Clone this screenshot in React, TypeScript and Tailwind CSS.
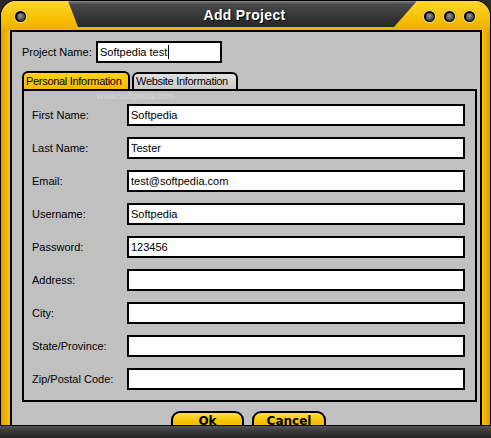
import React from 'react';

const fields: { label: string; value: string }[] = [
  { label: 'First Name:', value: 'Softpedia' },
  { label: 'Last Name:', value: 'Tester' },
  { label: 'Email:', value: 'test@softpedia.com' },
  { label: 'Username:', value: 'Softpedia' },
  { label: 'Password:', value: '123456' },
  { label: 'Address:', value: '' },
  { label: 'City:', value: '' },
  { label: 'State/Province:', value: '' },
  { label: 'Zip/Postal Code:', value: '' },
];

const Knob: React.FC = () => (
  <div className="w-[15px] h-[15px] rounded-full bg-[radial-gradient(circle,#fff2a0_40%,#e8b000_75%)] flex items-center justify-center">
    <div className="w-[11px] h-[11px] rounded-full bg-black flex items-center justify-center">
      <div className="w-[8px] h-[8px] rounded-full bg-[radial-gradient(circle_at_40%_35%,#9a9a9a,#3a3a3a_70%)]" />
    </div>
  </div>
);

const App: React.FC = () => {
  return (
    <div className="w-[491px] h-[438px] flex flex-col bg-[#2a2a2a] overflow-hidden font-['Liberation_Sans',Arial,sans-serif] text-[11px] text-black">
      {/* window frame */}
      <div className="flex-1 flex flex-col rounded-t-[16px] border border-b-0 border-black bg-[linear-gradient(90deg,#e49c00_0px,#f7c200_8px,#f7c200_calc(100%-8px),#e49c00_100%)] overflow-hidden min-h-0">
        {/* title row */}
        <div className="h-[29px] flex shrink-0 bg-[linear-gradient(180deg,#ffd633,#f7c000_60%,#eeb000)]">
          <div className="w-[67px] flex items-start pt-[8px] pl-[12px]">
            <Knob />
          </div>
          <div className="flex-1 h-[26px] bg-[linear-gradient(180deg,#8a8a8a_0px,#4a4a4a_3px,#3a3a3a_50%,#262626_100%)] [clip-path:polygon(0_0,100%_0,calc(100%-23px)_100%,10px_100%)] flex items-center justify-center pt-[3px] pl-[4px]">
            <span className="text-white font-bold text-[14px] tracking-[0.3px] [text-shadow:1px_1px_0_#000]">
              Add Project
            </span>
          </div>
          <div className="w-[73px] flex items-start pt-[8px] pl-[5px] gap-[5px]">
            <Knob />
            <Knob />
            <Knob />
          </div>
        </div>

        {/* body */}
        <div className="flex-1 flex pl-[9px] pr-[8px] min-h-0">
          <div className="flex-1 relative bg-[#c0c0c0] border-2 border-b-0 border-black flex flex-col overflow-hidden">
            {/* watermark */}
            <span className="absolute left-[85px] top-[59px] text-[9px] leading-[10px] text-[#d6d6d6] pointer-events-none">
              www.softpedia.com
            </span>

            {/* project name */}
            <div className="flex items-center pt-[9px] pl-[10px] relative">
              <span className="w-[74px]">Project Name:</span>
              <div className="w-[126px] h-[22px] bg-white border-2 border-black flex items-center pl-[2px]">
                <span>Softpedia test</span>
                <span className="w-px h-[14px] bg-black ml-px" />
              </div>
            </div>

            {/* tabs */}
            <div className="flex mt-[8px] ml-[10px] relative">
              <div className="w-[108px] h-[18px] rounded-t-[6px] border-2 border-b-0 border-black bg-[linear-gradient(180deg,#ffd21a,#f5b800)] flex items-center pl-[2px] whitespace-nowrap tracking-[-0.3px] overflow-hidden">
                Personal Information
              </div>
              <div className="w-[106px] h-[17px] mt-[1px] ml-[2px] rounded-t-[6px] border-2 border-b-0 border-black bg-[linear-gradient(180deg,#e2e2e2,#c8c8c8)] flex items-center pl-[2px] whitespace-nowrap tracking-[-0.3px] overflow-hidden">
                Website Information
              </div>
            </div>

            {/* tab panel */}
            <div className="ml-[10px] w-[455px] border-2 border-black pt-[13px] pb-[10px] pl-[8px] flex flex-col gap-[11px]">
              {fields.map((f) => (
                <div key={f.label} className="flex items-center">
                  <span className="w-[95px]">{f.label}</span>
                  <div className="w-[338px] h-[22px] bg-white border-2 border-black flex items-center pl-[2px]">
                    {f.value}
                  </div>
                </div>
              ))}
            </div>

            {/* buttons */}
            <div className="flex justify-center gap-[8px] mt-[9px] pl-[5px]">
              <div className="w-[73px] h-[22px] shrink-0 rounded-t-[9px] border-2 border-black bg-[linear-gradient(180deg,#ffe040,#f7c000_50%,#eeb000)] flex justify-center pt-[1px] font-bold text-[12px] leading-[14px] font-['DejaVu_Sans',sans-serif]">
                Ok
              </div>
              <div className="w-[74px] h-[22px] shrink-0 rounded-t-[9px] border-2 border-black bg-[linear-gradient(180deg,#ffe040,#f7c000_50%,#eeb000)] flex justify-center pt-[1px] font-bold text-[12px] leading-[14px] font-['DejaVu_Sans',sans-serif]">
                Cancel
              </div>
            </div>
          </div>
        </div>
      </div>

      {/* bottom bar */}
      <div className="h-[13px] shrink-0 border-t border-black bg-[linear-gradient(180deg,#555,#3a3a3a_40%,#222)]" />
    </div>
  );
};

export default App;
